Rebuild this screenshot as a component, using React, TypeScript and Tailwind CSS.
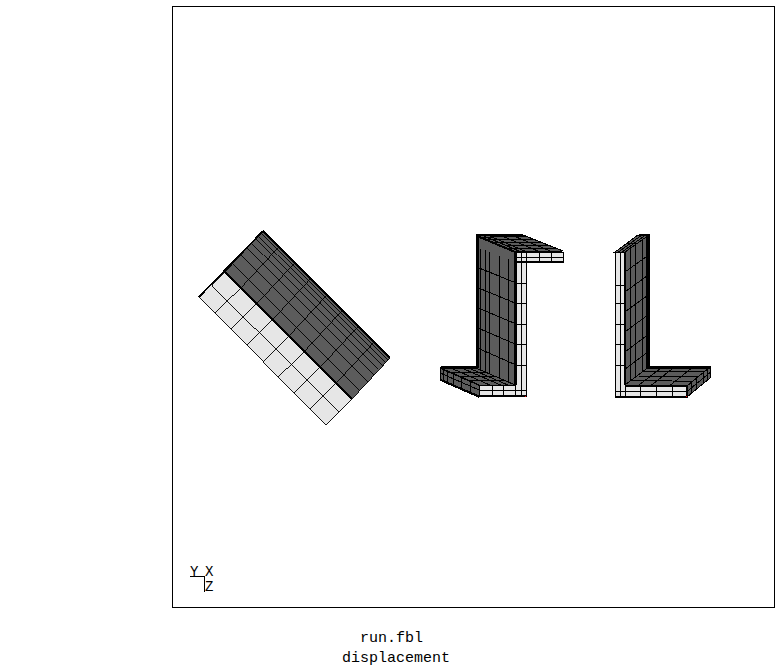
import React from "react";

const DARK = "#5c5c5c";
const LIGHT = "#e6e6e6";

type Pt = [number, number];

const lerp = (a: Pt, b: Pt, t: number): Pt => [a[0] + (b[0] - a[0]) * t, a[1] + (b[1] - a[1]) * t];

// grid lines on a four cornered face, given as fractions along each side
const Mesh = ({ c, us, vs, w = 1 }: { c: [Pt, Pt, Pt, Pt]; us: number[]; vs: number[]; w?: number }) => (
  <g stroke="#000" strokeWidth={w} fill="none">
    {us.map((u) => {
      const p = lerp(c[0], c[1], u);
      const q = lerp(c[3], c[2], u);
      return <line key={"u" + u} x1={p[0]} y1={p[1]} x2={q[0]} y2={q[1]} />;
    })}
    {vs.map((v) => {
      const p = lerp(c[0], c[3], v);
      const q = lerp(c[1], c[2], v);
      return <line key={"v" + v} x1={p[0]} y1={p[1]} x2={q[0]} y2={q[1]} />;
    })}
  </g>
);

const Face = ({ c, fill, w = 1 }: { c: Pt[]; fill: string; w?: number }) => (
  <polygon points={c.map((p) => p.join(",")).join(" ")} fill={fill} stroke="#000" strokeWidth={w} />
);

const eighths = [1, 2, 3, 4, 5, 6, 7].map((n) => n / 8);
const sixths = [1, 2, 3, 4, 5].map((n) => n / 6);

const RotatedView = () => (
  <g>
    <Face c={[[225, 272], [263, 231], [390, 358], [352, 399]]} fill={DARK} w={0.9} />
    <Face c={[[199, 297], [225, 272], [352, 399], [326, 425]]} fill={LIGHT} w={0.9} />
    <Mesh c={[[199, 297], [225, 272], [352, 399], [326, 425]]} us={[0.5]} vs={eighths} w={0.9} />
    <Mesh c={[[225, 272], [263, 231], [390, 358], [352, 399]]} us={[0.2, 0.42, 0.58, 0.69, 0.81, 0.89, 0.95]} vs={eighths} w={0.9} />
    <line x1="199" y1="297" x2="263" y2="231" stroke="#000" strokeWidth="1.7" />
    <line x1="263" y1="231" x2="390" y2="358" stroke="#000" strokeWidth="1.5" />
    <line x1="225" y1="272" x2="352" y2="399" stroke="#000" strokeWidth="1.7" />
  </g>
);

const ChannelView = () => (
  <g>
    {/* top flange, seen from above */}
    <Face c={[[476, 235], [523, 235], [563, 251], [515, 252]]} fill={DARK} />
    <Mesh c={[[476, 235], [523, 235], [563, 251], [515, 252]]} us={[0.12, 0.24, 0.5, 0.75]} vs={[0.12, 0.25, 0.45, 0.65, 0.82]} />
    <line x1="476" y1="235" x2="523" y2="235" stroke="#000" strokeWidth="2" />
    {/* web */}
    <Face c={[[476, 235], [515, 252], [515, 385], [476, 368]]} fill={DARK} />
    <Mesh c={[[477, 247], [515, 262], [515, 385], [477, 368]]} us={[0.1, 0.22, 0.34, 0.6, 0.82]} vs={sixths} />
    <line x1="477" y1="236" x2="515" y2="252" stroke="#000" strokeWidth="2" />
    {/* bottom flange, seen from above */}
    <Face c={[[440, 368], [476, 368], [515, 385], [479, 385]]} fill={DARK} />
    <Mesh c={[[440, 368], [476, 368], [515, 385], [479, 385]]} us={[0.3, 0.6, 0.8]} vs={[0.25, 0.5, 0.75]} />
    <Face c={[[440, 368], [479, 385], [479, 396], [440, 379]]} fill={DARK} />
    <Mesh c={[[440, 368], [479, 385], [479, 396], [440, 379]]} us={[0.08, 0.2, 0.35, 0.55, 0.78]} vs={[0.45]} />
    <line x1="440" y1="380" x2="479" y2="397" stroke="#000" strokeWidth="1.5" />
    <line x1="440" y1="368" x2="479" y2="385" stroke="#000" strokeWidth="1.5" />
    {/* light end faces */}
    <Face c={[[515, 252], [563, 252], [563, 262], [526, 262], [526, 396], [479, 396], [479, 385], [515, 385]]} fill={LIGHT} />
    <g stroke="#000" strokeWidth="1">
      {[283, 303, 324, 344, 365].map((y) => (
        <line key={y} x1="515" y1={y} x2="526" y2={y} />
      ))}
      <line x1="521" y1="252" x2="521" y2="396" />
      <line x1="515" y1="257" x2="563" y2="257" />
      <line x1="526" y1="252" x2="526" y2="262" />
      <line x1="539" y1="252" x2="539" y2="262" />
      <line x1="551" y1="252" x2="551" y2="262" />
      <line x1="479" y1="390" x2="526" y2="390" />
      <line x1="492" y1="385" x2="492" y2="396" />
      <line x1="503" y1="385" x2="503" y2="396" />
      <line x1="515" y1="385" x2="515" y2="396" />
    </g>
    <g stroke="#000" strokeWidth="3" fill="none">
      <line x1="477" y1="235" x2="477" y2="368" />
      <line x1="476" y1="367" x2="441" y2="367" strokeWidth="3" />
    </g>
    <line x1="515" y1="252" x2="515" y2="385" stroke="#000" strokeWidth="3" />
    <line x1="479" y1="396" x2="526" y2="396" stroke="#000" strokeWidth="2" />
    <line x1="515" y1="262" x2="563" y2="262" stroke="#000" strokeWidth="2" />
    <rect x="525" y="396" width="1" height="1" fill="#f00" />
  </g>
);

const AngleView = () => (
  <g>
    <Face c={[[615, 252], [638, 235], [649, 235], [625, 252]]} fill={DARK} />
    <Mesh c={[[615, 252], [638, 235], [649, 235], [625, 252]]} us={[0.5]} vs={[0.35, 0.7]} />
    <Face c={[[625, 252], [649, 235], [649, 367], [625, 385]]} fill={DARK} />
    <Mesh c={[[625, 252], [649, 235], [649, 367], [625, 385]]} us={[0.22, 0.42, 0.72, 0.88]} vs={[0.15, 0.3, 0.45, 0.6, 0.75, 0.88]} />
    <Face c={[[625, 385], [649, 367], [710, 367], [687, 386]]} fill={DARK} />
    <Mesh c={[[625, 385], [649, 367], [710, 367], [687, 386]]} us={[0.25, 0.5, 0.75]} vs={[0.22, 0.42, 0.72]} />
    <Face c={[[687, 386], [710, 367], [710, 378], [687, 397]]} fill={DARK} />
    <Mesh c={[[687, 386], [710, 367], [710, 378], [687, 397]]} us={[0.2, 0.4, 0.72, 0.88]} vs={[0.5]} />
    <Face c={[[615, 252], [625, 252], [625, 386], [687, 386], [687, 397], [615, 397]]} fill={LIGHT} />
    <g stroke="#000" strokeWidth="1">
      {[285, 303, 324, 344, 365].map((y) => (
        <line key={y} x1="615" y1={y} x2="625" y2={y} />
      ))}
      <line x1="620" y1="252" x2="620" y2="397" />
      <line x1="615" y1="391" x2="687" y2="391" />
      <line x1="625" y1="386" x2="625" y2="397" />
      <line x1="640" y1="386" x2="640" y2="397" />
      <line x1="656" y1="386" x2="656" y2="397" />
      <line x1="672" y1="386" x2="672" y2="397" />
    </g>
    <line x1="648" y1="235" x2="648" y2="367" stroke="#000" strokeWidth="3" />
    <line x1="648" y1="367" x2="710" y2="367" stroke="#000" strokeWidth="3" />
    <line x1="639" y1="235" x2="649" y2="235" stroke="#000" strokeWidth="2" />
    <line x1="625" y1="252" x2="625" y2="385" stroke="#000" strokeWidth="2" />
    <line x1="615" y1="397" x2="687" y2="397" stroke="#000" strokeWidth="2" />
    <line x1="687" y1="386" x2="687" y2="397" stroke="#000" strokeWidth="2" />
    <rect x="686" y="396" width="1" height="1" fill="#f00" />
  </g>
);

const Triad = () => (
  <g>
    <line x1="190" y1="576.5" x2="204.5" y2="576.5" stroke="#000" />
    <line x1="204.5" y1="576.5" x2="204.5" y2="592" stroke="#000" />
    <text x="190" y="576" fontSize="14" fill="#000" fontFamily='"Liberation Mono", monospace'>Y</text>
    <text x="205" y="576" fontSize="14" fill="#000" fontFamily='"Liberation Mono", monospace'>X</text>
    <text x="205" y="591" fontSize="14" fill="#000" fontFamily='"Liberation Mono", monospace'>Z</text>
  </g>
);

const App = () => {
  return (
    <div className="w-[784px] h-[672px] bg-white overflow-hidden pt-[6px] pl-[172px] font-['Liberation_Mono',monospace] text-black">
      <div className="w-[603px] h-[602px] border border-black">
        <svg viewBox="173 7 601 600" width="601" height="600" className="block" shapeRendering="crispEdges">
          <RotatedView />
          <ChannelView />
          <AngleView />
          <Triad />
        </svg>
      </div>
      <div className="flex flex-col mt-[21px] text-[15px] leading-[20px]">
        <span className="ml-[188px]">run.fbl</span>
        <span className="ml-[170px]">displacement</span>
      </div>
    </div>
  );
};

export default App;
